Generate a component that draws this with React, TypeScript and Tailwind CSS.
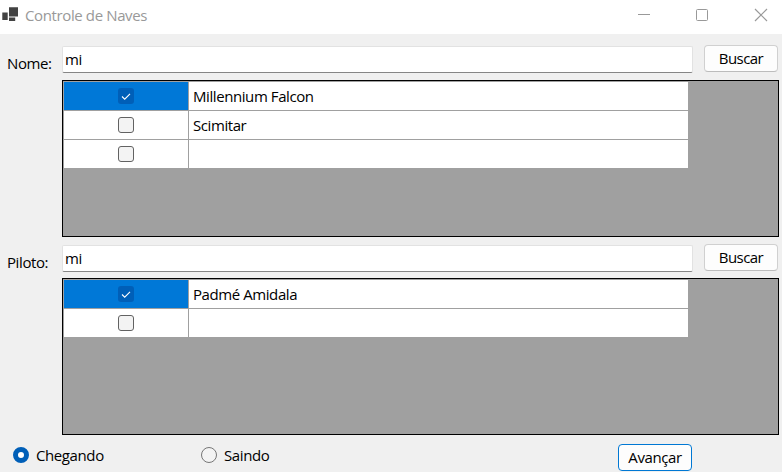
import React from 'react';

function Check({ on }: { on?: boolean }) {
  return on ? (
    <span className="flex size-4 items-center justify-center rounded-[3px] bg-[#005fb8]">
      <svg width="16" height="16" viewBox="0 0 16 16" fill="none" stroke="#fff" strokeWidth="1.1">
        <path d="M4 8.5L6.7 11.2L12 5.8" />
      </svg>
    </span>
  ) : (
    <span className="size-4 rounded-[3px] border border-[#626262] bg-[#f3f3f3]" />
  );
}

function Row({ text, on }: { text: string; on?: boolean }) {
  return (
    <div className="flex h-[28px] gap-px">
      <div className={`flex w-[124px] items-center justify-center ${on ? 'bg-[#0078d7]' : 'bg-white'}`}>
        <Check on={on} />
      </div>
      <div className="flex w-[499px] items-center bg-white pl-1">
        <span className="text-[15px] tracking-[-0.42px] whitespace-nowrap">{text}</span>
      </div>
    </div>
  );
}

function Grid({ rows }: { rows: string[] }) {
  return (
    <div className="ml-[62px] flex h-[157px] w-[717px] flex-col gap-px border border-black bg-[#a0a0a0] pt-px pl-px">
      {rows.map((text, i) => (
        <Row key={i} text={text} on={i === 0} />
      ))}
    </div>
  );
}

function Search({ label }: { label: string }) {
  return (
    <div className="flex h-[28px] items-start">
      <label className="w-[62px] pt-[7px] pl-[7px] leading-[22px] tracking-[-0.4px]">{label}</label>
      <div className="mt-px flex h-[27px] w-[631px] items-center rounded-[2px] border border-[#e2e2e2] border-b-[#868686] bg-white pl-[2px] tracking-[-0.3px]">
        mi
      </div>
      <button className="ml-[11px] flex h-[27px] w-[74px] justify-center rounded-[4px] border border-[#d0d0d0] border-b-[#bcbcbc] bg-[#fdfdfd] leading-[24px] tracking-[-0.55px]">
        Buscar
      </button>
    </div>
  );
}

function Radio({ label, on }: { label: string; on?: boolean }) {
  return (
    <div className="flex w-[188px] items-center gap-[7px]">
      <span
        className={`size-4 rounded-full ${on ? 'border-[5px] border-[#005fb8] bg-white' : 'border border-[#767676] bg-[#f3f3f3]'}`}
      />
      <span className="leading-[22px] tracking-[-0.4px]">{label}</span>
    </div>
  );
}

export default function App() {
  return (
    <div className="h-[472px] w-[782px] overflow-hidden bg-[#f0f0f0] font-['Open_Sans','Noto_Sans',sans-serif] text-[15px] text-black">
      <header className="flex h-[34px] items-start bg-white">
        <svg className="mt-[6px] ml-[1px]" width="18" height="17" viewBox="0 0 18 17" fill="#424242">
          <path d="M1.3 6.4h5.4v7.6H1.3zM8 1.2h9v9.4H8zM8 11.4h6.2v3.6H8z" />
        </svg>
        <span className="mt-[4px] ml-[6px] leading-[22px] tracking-[-0.38px] text-[#999]">Controle de Naves</span>
        <svg className="ml-auto" width="146" height="34" viewBox="0 0 146 34" fill="none" stroke="#999">
          <path d="M2 14.5h12" />
          <rect x="60.5" y="9.5" width="11" height="11" rx="1" />
          <path d="M119 9l12 12M131 9l-12 12" strokeWidth="1.2" />
        </svg>
      </header>
      <main className="flex flex-col">
        <div className="mt-[11px]">
          <Search label="Nome:" />
        </div>
        <div className="mt-[7px]">
          <Grid rows={['Millennium Falcon', 'Scimitar', '']} />
        </div>
        <div className="mt-[7px]">
          <Search label="Piloto:" />
        </div>
        <div className="mt-[6px]">
          <Grid rows={['Padmé Amidala', '']} />
        </div>
        <div className="mt-[9px] flex h-[27px] items-start pl-[13px]">
          <Radio label="Chegando" on />
          <Radio label="Saindo" />
          <button className="ml-[229px] flex h-[27px] w-[74px] justify-center rounded-[4px] border border-[#0078d4] bg-[#fdfdfd] leading-[24px] tracking-[-0.4px]">
            Avançar
          </button>
        </div>
      </main>
    </div>
  );
}
